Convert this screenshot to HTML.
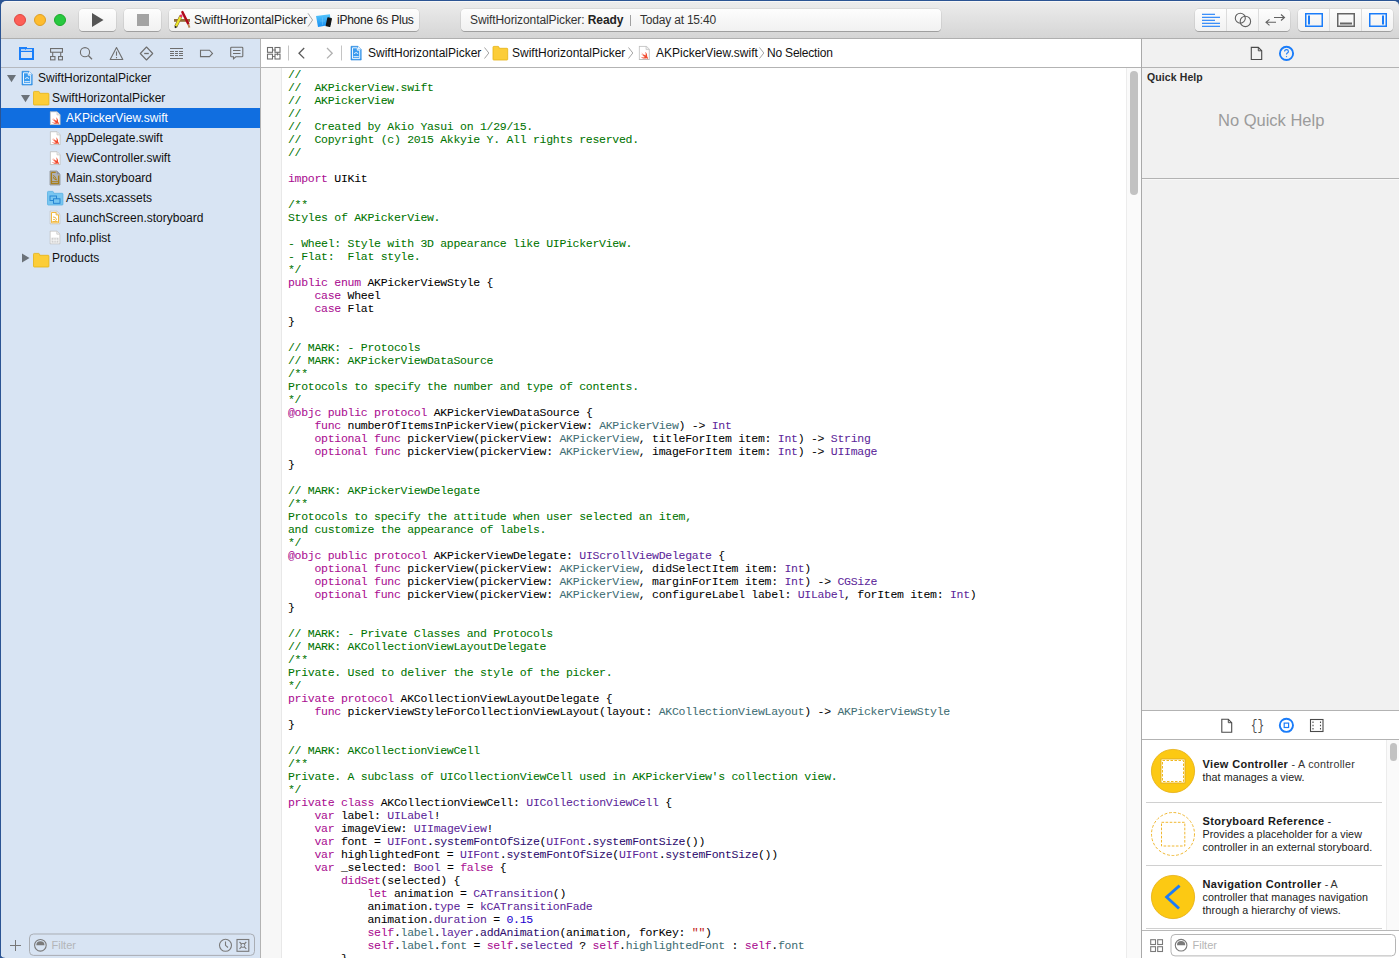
<!DOCTYPE html>
<html><head><meta charset="utf-8">
<style>
*{margin:0;padding:0;box-sizing:border-box}
html,body{width:1399px;height:958px;overflow:hidden;background:#2b5493}
body{position:relative;font-family:"Liberation Sans",sans-serif;color:#000}
.a{position:absolute;white-space:nowrap}
svg{position:absolute;overflow:visible}
#toolbar{position:absolute;left:1px;top:1px;width:1398px;height:37px;background:linear-gradient(#ececec,#d5d5d5);border-top:1px solid #f7f7f7;border-radius:5px 5px 0 0}
#tbline{position:absolute;left:1px;top:38px;width:1398px;height:1px;background:#afafaf}
.btn{position:absolute;top:9px;height:22px;background:linear-gradient(#fdfdfd,#f1f1f1);border-radius:4px;box-shadow:0 0 0 0.5px rgba(0,0,0,.12),0 1px 0.5px rgba(0,0,0,.22)}
.tl{position:absolute;top:14px;width:12px;height:12px;border-radius:50%}
#nav{position:absolute;left:1px;top:39px;width:259px;height:919px;background:#d8e4f3}
#navsep{position:absolute;left:260px;top:39px;width:1px;height:919px;background:#b3b3b3}
#editor{position:absolute;left:261px;top:39px;width:880px;height:919px;background:#fff}
#util{position:absolute;left:1142px;top:39px;width:257px;height:919px;background:#f1f1f1}
#utilsep{position:absolute;left:1141px;top:39px;width:1px;height:919px;background:#a9a9a9}
.hl{position:absolute;height:1px}
.t12{font-size:12px;line-height:12px}
.t11{font-size:11px;line-height:11px}
#code{position:absolute;left:288px;top:68px;font-family:"Liberation Mono",monospace;font-size:11.5px;line-height:13px;white-space:pre;color:#000;-webkit-text-stroke:0.05px;letter-spacing:-0.282px}
.c{color:#007400}.k{color:#aa0d91}.t{color:#5c2699}.p{color:#3f6e74}.f{color:#2e0d6e}.pf{color:#26474b}.s{color:#c41a16}.n{color:#1c00cf}
</style></head><body>
<!-- TOOLBAR -->
<div id="toolbar"></div>
<div id="tbline"></div>
<div class="tl" style="left:14px;background:#fd5f57;border:0.5px solid #df4640"></div>
<div class="tl" style="left:34px;background:#febc2e;border:0.5px solid #de9f22"></div>
<div class="tl" style="left:54px;background:#28c840;border:0.5px solid #1aab29"></div>
<div class="btn" style="left:79px;width:37px"></div>
<div class="btn" style="left:124px;width:37px"></div>
<div class="btn" style="left:169px;width:250px"></div>
<div class="btn" style="left:461px;width:480px"></div>
<div class="btn" style="left:1195px;width:95px"></div>
<div class="btn" style="left:1298px;width:95px"></div>
<svg style="left:0;top:0" width="1399" height="38">
 <polygon points="92,13 92,27 103.5,20" fill="#555"/>
 <rect x="137" y="14" width="12" height="12" fill="#a3a3a3"/>
 <!-- xcode icon -->
 <g transform="translate(174,11)">
  <line x1="1.6" y1="16" x2="6.9" y2="5" stroke="#6b5a2a" stroke-width="3"/>
  <rect x="0" y="8" width="16" height="2.8" fill="#94703a"/>
  <line x1="1.8" y1="15.6" x2="6.9" y2="5" stroke="#ece52c" stroke-width="2.2"/>
  <line x1="1.2" y1="16.8" x2="2" y2="15.2" stroke="#222" stroke-width="1.6"/>
  <circle cx="7.1" cy="4.9" r="1.4" fill="#e8336a"/>
  <line x1="8.4" y1="1.1" x2="14.2" y2="12.6" stroke="#b00818" stroke-width="2.4" stroke-linecap="round"/>
  <line x1="14.2" y1="13" x2="15.5" y2="16.6" stroke="#b98450" stroke-width="1.8"/>
 </g>
 <polyline points="308,13.3 312.6,20 308,26.6" fill="none" stroke="#a5a5a5" stroke-width="1"/>
 <!-- device icon -->
 <defs><linearGradient id="dg" x1="0" y1="0" x2="0" y2="1"><stop offset="0" stop-color="#56c6fb"/><stop offset="1" stop-color="#168ef2"/></linearGradient></defs>
 <g transform="translate(316,13)">
  <path d="M0,3 L13.9,1.2 L15,11.7 L2,14 Z" fill="url(#dg)"/>
  <path d="M6.5,4.5 V12 M4,8 H9" stroke="#9fdcff" stroke-width="0.5" opacity="0.6"/>
  <rect x="10.4" y="4.6" width="4.8" height="9.2" rx="0.8" fill="#151515" transform="rotate(12 12.8 9.2)"/>
 </g>
 <line x1="630.5" y1="15" x2="630.5" y2="26" stroke="#a0a0a0" stroke-width="1"/>
 <!-- right group 1 -->
 <line x1="1226.5" y1="9" x2="1226.5" y2="31" stroke="#dcdcdc"/>
 <line x1="1258.5" y1="9" x2="1258.5" y2="31" stroke="#dcdcdc"/>
 <g stroke="#1a7cf9" stroke-width="1.1">
  <line x1="1202" y1="14.3" x2="1215" y2="14.3"/>
  <line x1="1202" y1="17.3" x2="1220" y2="17.3"/>
  <line x1="1202" y1="20.3" x2="1215" y2="20.3"/>
  <line x1="1202" y1="23.3" x2="1220" y2="23.3"/>
  <line x1="1202" y1="26.3" x2="1220" y2="26.3"/>
 </g>
 <g fill="none" stroke="#616161" stroke-width="1.1">
  <circle cx="1240.3" cy="18.2" r="5"/>
  <circle cx="1245.4" cy="21.4" r="5.2"/>
  <path d="M1274,17.5 H1284.5 M1281,14.5 L1284.5,17.5 L1281,20.5"/>
  <path d="M1276,22.3 H1266 M1269.5,19.3 L1266,22.3 L1269.5,25.3"/>
 </g>
 <!-- right group 2 -->
 <line x1="1329.5" y1="9" x2="1329.5" y2="31" stroke="#dcdcdc"/>
 <line x1="1361.5" y1="9" x2="1361.5" y2="31" stroke="#dcdcdc"/>
 <g fill="none" stroke-width="1.5">
  <rect x="1305.75" y="13.75" width="16.5" height="12.5" stroke="#1a7cf9"/>
  <rect x="1337.75" y="13.75" width="16.5" height="12.5" stroke="#666"/>
  <rect x="1369.75" y="13.75" width="16.5" height="12.5" stroke="#1a7cf9"/>
 </g>
 <rect x="1308" y="15.5" width="2" height="9" fill="#1a7cf9"/>
 <rect x="1340" y="22.5" width="12" height="2" fill="#666"/>
 <rect x="1382" y="15.5" width="2" height="9" fill="#1a7cf9"/>
</svg>
<div class="a t12" style="left:194px;top:14px;color:#222">SwiftHorizontalPicker</div>
<div class="a t12" style="left:337px;top:14px;color:#222;letter-spacing:-0.25px">iPhone 6s Plus</div>
<div class="a t12" style="left:470px;top:14px;color:#333;letter-spacing:-0.1px">SwiftHorizontalPicker: <b style="color:#222">Ready</b></div>
<div class="a t12" style="left:640px;top:14px;color:#333;letter-spacing:-0.2px">Today at 15:40</div>

<!-- PANELS -->
<div id="nav"></div>
<div id="navsep"></div>
<div id="editor"></div>
<div id="utilsep"></div>
<div id="util"></div>
<!-- NAV tab bar -->
<div class="hl" style="left:1px;top:67px;width:259px;background:#b5b9bf"></div>
<svg style="left:0;top:39px" width="260" height="28">
 <defs>
  <symbol id="page" viewBox="0 0 11 14"><path d="M0.5,0.5 H7.3 L10.5,3.7 V13.5 H0.5 Z" fill="#fff" stroke="#bdbdbd" stroke-width="1"/><path d="M7.3,0.5 V3.7 H10.5" fill="#eee" stroke="#c9c9c9" stroke-width="0.8"/></symbol>
  <symbol id="swift" viewBox="0 0 11 14"><use href="#page" width="11" height="14"/><path transform="translate(1.2,5.1) scale(0.088)" d="M80,60 C85,45 78,25 58,10 C66,25 68,42 62,52 C45,42 25,25 15,15 C25,30 38,42 48,50 C35,45 20,35 10,28 C25,45 42,60 58,68 C42,76 22,72 8,64 C25,82 50,90 72,82 C78,82 85,86 88,92 C92,85 90,70 80,60 Z" fill="#f04a2e"/></symbol>
 </defs>
 <g fill="none" stroke="#6e6e6e" stroke-width="1">
  <!-- folder active -->
  <path d="M19,8 H27 V9 H34 V21 H19 Z" fill="#1a7ffa" stroke="none"/>
  <rect x="21" y="10.2" width="11" height="1.6" fill="#d8e4f3" stroke="none"/>
  <rect x="25" y="10.2" width="0.8" height="0.8" fill="#1a7ffa" stroke="none"/>
  <rect x="21" y="13" width="11" height="6" fill="#d8e4f3" stroke="none"/>
  <!-- hierarchy -->
  <rect x="50.55" y="9.55" width="11.9" height="3.7" stroke-width="1.1"/>
  <path d="M52.7,13.3 V17 M60.7,13.3 V17" stroke-width="1.1"/>
  <rect x="50.55" y="17.55" width="4.4" height="3.3" stroke-width="1.1"/>
  <rect x="58.55" y="17.55" width="3.9" height="3.3" stroke-width="1.1"/>
  <!-- search -->
  <circle cx="85" cy="13.2" r="4.6" stroke-width="1.1"/>
  <path d="M88.3,16.5 L92,20.3" stroke-width="1.3"/>
  <!-- warning -->
  <path d="M116.5,8.5 L122.8,20.5 H110.2 Z" stroke-linejoin="round" stroke-width="1.1"/>
  <path d="M116.5,12.5 V16.8 M116.5,18 V19.2" stroke-width="1.1"/>
  <!-- test diamond -->
  <path d="M146.5,8 L152.7,14.5 L146.5,21 L140.3,14.5 Z" stroke-linejoin="round" stroke-width="1.1"/>
  <path d="M144.2,14.5 H148.8" stroke-width="1.3"/>
  <!-- debug -->
  <path d="M170,9.5 H183 M170,19.5 H183" stroke-width="1.1"/>
  <path d="M170,12.5 H174 M175,12.5 H178 M179,12.5 H183 M170,14.5 H174 M175,14.5 H178 M179,14.5 H183 M170,16.5 H174 M175,16.5 H178 M179,16.5 H183" stroke-width="1"/>
  <!-- breakpoint -->
  <path d="M200.5,11.2 H209.5 L212.5,14.4 L209.5,17.6 H200.5 Z" stroke-width="1.1"/>
  <!-- report bubble -->
  <path d="M231.5,8.2 H242 Q242.8,8.2 242.8,9 V17 Q242.8,17.8 242,17.8 H235.8 L233.5,19.8 V17.8 H231.5 Q230.7,17.8 230.7,17 V9 Q230.7,8.2 231.5,8.2 Z" stroke-width="1.1"/>
  <path d="M233,11.5 H240.5 M233,14.5 H240.5" stroke-width="1"/>
 </g>
</svg>
<!-- selection -->
<div class="a" style="left:1px;top:108px;width:259px;height:20px;background:#106ee0"></div>
<svg style="left:0;top:68px" width="260" height="200">
 <!-- triangles -->
 <polygon points="7,7 16,7 11.5,14.3" fill="#6b7279"/>
 <polygon points="21,27 30,27 25.5,34.3" fill="#6b7279"/>
 <polygon points="22,185.5 22,194.5 29.5,190" fill="#6b7279"/>
 <!-- project icon -->
 <g transform="translate(21.5,2.8)">
  <path d="M0.5,0.5 H7.5 L10.7,3.7 V14.2 H0.5 Z" fill="#3a9bef" stroke="#2b87dc" stroke-width="0.6"/>
  <path d="M7.5,0.5 V3.7 H10.7 Z" fill="#e9f3fc"/>
  <path d="M2,2 H6.8 V4.4 H9.2 V12.8 H2 Z" fill="none" stroke="#fff" stroke-width="0.9"/>
  <path d="M3.6,7.8 Q5.6,5.6 7.6,7.8" fill="none" stroke="#fff" stroke-width="0.9"/>
  <path d="M3,10.9 H8.3" stroke="#fff" stroke-width="0.9"/>
 </g>
 <!-- folder -->
 <g transform="translate(33,23)">
  <path d="M0.5,1.2 Q0.5,0.4 1.3,0.4 H5.5 Q6.3,0.4 6.5,1.2 L6.7,2.3 H15.2 Q15.9,2.3 15.9,3 V13.3 Q15.9,14 15.2,14 H1.2 Q0.5,14 0.5,13.3 Z" fill="#fccd38" stroke="#e6b313" stroke-width="0.8"/>
 </g>
 <g transform="translate(33,185)">
  <path d="M0.5,1.2 Q0.5,0.4 1.3,0.4 H5.5 Q6.3,0.4 6.5,1.2 L6.7,2.3 H15.2 Q15.9,2.3 15.9,3 V13.3 Q15.9,14 15.2,14 H1.2 Q0.5,14 0.5,13.3 Z" fill="#fccd38" stroke="#e6b313" stroke-width="0.8"/>
 </g>
 <!-- swift files -->
 <use href="#swift" x="49.7" y="43.2" width="11" height="14"/>
 <use href="#swift" x="49.7" y="63.2" width="11" height="14"/>
 <use href="#swift" x="49.7" y="83.2" width="11" height="14"/>
 <!-- Main.storyboard -->
 <g transform="translate(49.5,102.5)">
  <path d="M0.5,0.5 H7.3 L10.5,3.7 V14.5 H0.5 Z" fill="#aeb1b7" stroke="#8d9096" stroke-width="0.8"/>
  <path d="M7.3,0.5 V3.7 H10.5 Z" fill="#8f9298"/>
  <path d="M1.9,1.9 H6.2 M9.1,5 V13.2 H1.9 V1.9" fill="none" stroke="#a8801c" stroke-width="1.3"/>
  <path d="M1.9,11.2 H9.1" stroke="#a8801c" stroke-width="1.1"/>
  <path d="M3.6,5 Q5.8,5.6 6.3,7.8 Q6.8,9.4 7.6,9.6 M3.8,6.6 Q4.3,9 6.8,9.4" fill="none" stroke="#a8801c" stroke-width="1"/>
 </g>
 <!-- Assets -->
 <g transform="translate(47,123)">
  <path d="M0.5,1.2 Q0.5,0.4 1.3,0.4 H5.5 Q6.3,0.4 6.5,1.2 L6.7,2.3 H15.2 Q15.9,2.3 15.9,3 V13.3 Q15.9,14 15.2,14 H1.2 Q0.5,14 0.5,13.3 Z" fill="#79c6f0" stroke="#58b0e3" stroke-width="0.8"/>
  <rect x="3" y="5" width="6.5" height="4.5" fill="none" stroke="#1f7fd0" stroke-width="0.9"/>
  <rect x="6.5" y="7.8" width="6.5" height="4.5" fill="#79c6f0" stroke="#1f7fd0" stroke-width="0.9"/>
 </g>
 <!-- LaunchScreen -->
 <g transform="translate(49.5,142.5)">
  <use href="#page" width="11" height="14"/>
  <path d="M2,2 H6.6 V4.4 H9 V12.3 H2 Z" fill="none" stroke="#f0b129" stroke-width="0.9"/>
  <path d="M3.5,6.5 Q6.5,6 7.2,9.4 M3.7,9 Q5.5,8.5 6.6,10.4" fill="none" stroke="#e3a41c" stroke-width="0.8"/>
  <path d="M2.8,11 H8.2" stroke="#f0b129" stroke-width="0.9"/>
 </g>
 <!-- Info.plist -->
 <g transform="translate(49.5,162.5)">
  <use href="#page" width="11" height="14"/>
  <rect x="2" y="7.2" width="7" height="5" fill="#cfcfcf"/>
  <path d="M2,9.7 H9 M4.4,7.2 V12.2 M6.7,7.2 V12.2" stroke="#fff" stroke-width="0.7"/>
 </g>
</svg>
<div class="a t12" style="left:38px;top:72px;color:#111">SwiftHorizontalPicker</div>
<div class="a t12" style="left:52px;top:92px;color:#111">SwiftHorizontalPicker</div>
<div class="a t12" style="left:66px;top:112px;color:#fff">AKPickerView.swift</div>
<div class="a t12" style="left:66px;top:132px;color:#111">AppDelegate.swift</div>
<div class="a t12" style="left:66px;top:152px;color:#111">ViewController.swift</div>
<div class="a t12" style="left:66px;top:172px;color:#111">Main.storyboard</div>
<div class="a t12" style="left:66px;top:192px;color:#111">Assets.xcassets</div>
<div class="a t12" style="left:66px;top:212px;color:#111">LaunchScreen.storyboard</div>
<div class="a t12" style="left:66px;top:232px;color:#111">Info.plist</div>
<div class="a t12" style="left:52px;top:252px;color:#111">Products</div>
<!-- filter bar -->
<svg style="left:0;top:930px" width="260" height="28">
 <path d="M15.5,10 V21 M10,15.5 H21" stroke="#777" stroke-width="1"/>
 <rect x="29.5" y="4" width="225" height="21.4" rx="4" fill="none" stroke="#a9adb3" stroke-width="1"/>
 <circle cx="40.4" cy="15.3" r="5.8" fill="none" stroke="#7a7a7a" stroke-width="1.1"/>
 <path d="M36.3,15.3 A4.1,4.1 0 0 1 44.5,15.3 Z" fill="#7a7a7a"/>
 <circle cx="225.5" cy="15.3" r="6" fill="none" stroke="#7a7a7a" stroke-width="1.1"/>
 <path d="M225.5,11.5 V15.3 L228,17.5" fill="none" stroke="#7a7a7a" stroke-width="1.1"/>
 <rect x="237" y="9.5" width="11.8" height="11.8" fill="none" stroke="#7a7a7a" stroke-width="1.1"/>
 <path d="M239.5,12 L246.3,18.8 M246.3,12 L239.5,18.8" stroke="#7a7a7a" stroke-width="1.1"/>
 <circle cx="242.9" cy="15.4" r="2" fill="#d8e4f3" stroke="#7a7a7a" stroke-width="1"/>
</svg>
<div class="a t11" style="left:51.5px;top:940px;color:#b3b5b8">Filter</div>

<!-- editor jump bar -->
<div class="hl" style="left:261px;top:67px;width:880px;background:#b3b3b3"></div>
<!-- gutter -->
<div class="a" style="left:261px;top:68px;width:20px;height:890px;background:#f7f7f7"></div>
<div class="a" style="left:281px;top:68px;width:1px;height:890px;background:#e8e8e8"></div>
<!-- scrollbar -->
<div class="a" style="left:1126px;top:68px;width:15px;height:890px;background:#fafafa;border-left:1px solid #ececec"></div>
<div class="a" style="left:1130px;top:71px;width:8px;height:124px;background:#c2c2c2;border-radius:4px"></div>
<svg style="left:261px;top:39px" width="880" height="28">
 <g fill="none" stroke="#6e6e6e" stroke-width="1.1">
  <rect x="6.5" y="8.5" width="5" height="4.8"/>
  <rect x="14" y="8.5" width="5" height="4.8"/>
  <rect x="6.5" y="15.2" width="5" height="4.8"/>
  <rect x="14" y="15.2" width="5" height="4.8"/>
 </g>
 <path d="M11.5,11 H15 M16.5,13.5 V16.5 M11.5,17.5 H14" stroke="#6e6e6e" stroke-width="0.9"/>
 <line x1="27.5" y1="6.5" x2="27.5" y2="21.5" stroke="#c4c4c4" stroke-width="1"/>
 <polyline points="43.2,9 38,14.2 43.2,19.4" fill="none" stroke="#595959" stroke-width="1.3"/>
 <polyline points="66,9 71.2,14.2 66,19.4" fill="none" stroke="#b0b0b0" stroke-width="1.3"/>
 <line x1="80.5" y1="6.5" x2="80.5" y2="21.5" stroke="#c4c4c4" stroke-width="1"/>
 <!-- project icon -->
 <g transform="translate(89.5,6.8)">
  <path d="M0.5,0.5 H7.5 L10.7,3.7 V14.2 H0.5 Z" fill="#3a9bef" stroke="#2b87dc" stroke-width="0.6"/>
  <path d="M7.5,0.5 V3.7 H10.7 Z" fill="#e9f3fc"/>
  <path d="M2,2 H6.8 V4.4 H9.2 V12.8 H2 Z" fill="none" stroke="#fff" stroke-width="0.9"/>
  <path d="M3.6,7.8 Q5.6,5.6 7.6,7.8" fill="none" stroke="#fff" stroke-width="0.9"/>
  <path d="M3,10.9 H8.3" stroke="#fff" stroke-width="0.9"/>
 </g>
 <g fill="none" stroke="#9a9a9a" stroke-width="0.9">
  <polyline points="223.5,8.5 227.8,14 223.5,19.5"/>
  <polyline points="367.5,8.5 371.8,14 367.5,19.5"/>
  <polyline points="498.5,8.5 502.8,14 498.5,19.5"/>
 </g>
 <g transform="translate(231.5,7)">
  <path d="M0.5,1.2 Q0.5,0.4 1.3,0.4 H5.5 Q6.3,0.4 6.5,1.2 L6.7,2.3 H14.5 Q15.2,2.3 15.2,3 V13.3 Q15.2,14 14.5,14 H1.2 Q0.5,14 0.5,13.3 Z" fill="#fccd38" stroke="#e6b313" stroke-width="0.8"/>
 </g>
 <use href="#swift" x="377.5" y="6.8" width="11.5" height="14.2"/>
</svg>
<div class="a t12" style="left:368px;top:47px;color:#111">SwiftHorizontalPicker</div>
<div class="a t12" style="left:512px;top:47px;color:#111">SwiftHorizontalPicker</div>
<div class="a t12" style="left:656px;top:47px;color:#111">AKPickerView.swift</div>
<div class="a t12" style="left:767px;top:47px;color:#111;letter-spacing:-0.2px">No Selection</div>

<!-- util tab bar -->
<div class="hl" style="left:1142px;top:67px;width:257px;background:#b3b3b3"></div>
<svg style="left:1142px;top:39px" width="257" height="28">
 <path d="M109.3,8.4 H116.3 L119.7,11.8 V20.5 H109.3 Z" fill="none" stroke="#4a4a4a" stroke-width="1.1"/>
 <path d="M116.3,8.4 V11.8 H119.7" fill="none" stroke="#4a4a4a" stroke-width="1"/>
 <circle cx="144.5" cy="14.4" r="6.6" fill="none" stroke="#1a7cf9" stroke-width="1.9"/>
 <path d="M142.6,12.6 Q142.6,10.6 144.5,10.6 Q146.4,10.6 146.4,12.4 Q146.4,13.4 145.3,14 Q144.5,14.5 144.5,15.6" fill="none" stroke="#1a7cf9" stroke-width="1.1"/>
 <circle cx="144.5" cy="17.6" r="0.7" fill="#1a7cf9"/>
</svg>
<div class="a" style="left:1147px;top:72px;font-size:10.5px;line-height:10.5px;font-weight:bold;color:#2a2a2a;letter-spacing:0.1px">Quick Help</div>
<div class="a" style="left:1218px;top:112px;font-size:16.5px;line-height:16.5px;color:#9b9b9b">No Quick Help</div>
<div class="hl" style="left:1142px;top:178px;width:257px;background:#b3b3b3"></div><div class="hl" style="left:1142px;top:179px;width:257px;background:#f8f8f8"></div>
<!-- library -->
<div class="hl" style="left:1142px;top:710px;width:257px;background:#b3b3b3"></div>
<div class="a" style="left:1142px;top:711px;width:257px;height:28px;background:#fff"></div>
<div class="hl" style="left:1142px;top:739px;width:257px;background:#b3b3b3"></div>
<svg style="left:1142px;top:711px" width="257" height="28">
 <path d="M79.8,8.3 H86.3 L89.7,11.7 V21.3 H79.8 Z" fill="none" stroke="#4a4a4a" stroke-width="1.1"/>
 <path d="M86.3,8.3 V11.7 H89.7" fill="none" stroke="#4a4a4a" stroke-width="1"/>
 <circle cx="144.4" cy="14.3" r="6.6" fill="none" stroke="#1a7cf9" stroke-width="1.9"/>
 <rect x="142.2" y="12.1" width="4.4" height="4.4" fill="none" stroke="#1a7cf9" stroke-width="1.2"/>
 <rect x="168.5" y="8.5" width="12.5" height="12" fill="none" stroke="#4a4a4a" stroke-width="1.1"/>
 <path d="M171,10.5 V12 M171,13.8 V15.3 M171,17 V18.5 M178.5,10.5 V12 M178.5,13.8 V15.3 M178.5,17 V18.5" stroke="#4a4a4a" stroke-width="1.1"/>
</svg>
<div class="a" style="left:1248.5px;top:719px;font-family:'Liberation Mono',monospace;font-size:14px;line-height:14px;color:#4a4a4a;transform:scaleX(0.8)">{}</div>
<div class="a" style="left:1142px;top:740px;width:257px;height:190px;background:#fff"></div>
<div class="a" style="left:1386px;top:740px;width:13px;height:190px;background:#fafafa;border-left:1px solid #ececec"></div>
<div class="a" style="left:1390px;top:743px;width:7px;height:18px;background:#c2c2c2;border-radius:3.5px"></div>
<div class="hl" style="left:1146px;top:802px;width:236px;background:#d0d0d0"></div>
<div class="hl" style="left:1146px;top:865px;width:236px;background:#d0d0d0"></div>
<div class="hl" style="left:1146px;top:928px;width:236px;background:#d0d0d0"></div>
<svg style="left:1142px;top:740px" width="257" height="190">
 <!-- VC -->
 <circle cx="31" cy="31" r="21.6" fill="#fcc913" stroke="#e5ad0f" stroke-width="0.8"/>
 <rect x="18.75" y="18.75" width="24.5" height="24.5" rx="1" fill="#fff" stroke="#eeba1c" stroke-width="1.5"/>
 <rect x="20.5" y="20.5" width="21" height="21" fill="none" stroke="#efb820" stroke-width="1" stroke-dasharray="2.5,1.5"/>
 <!-- SR -->
 <circle cx="31" cy="94" r="21.5" fill="none" stroke="#f0b832" stroke-width="1" stroke-dasharray="2.8,1.8"/>
 <rect x="19.5" y="82.3" width="23.3" height="23.7" fill="none" stroke="#f0b832" stroke-width="1" stroke-dasharray="2.6,1.5"/>
 <!-- NC -->
 <circle cx="31" cy="157" r="21.6" fill="#fcc913" stroke="#e5ad0f" stroke-width="0.8"/>
 <polyline points="37.6,145.6 24.6,157 37,168.6" fill="none" stroke="#1a7cf9" stroke-width="2.8"/>
</svg>
<div class="a" style="left:1202.5px;top:757.5px;font-size:11px;line-height:13px;color:#1a1a1a;white-space:normal;width:190px"><b style="letter-spacing:0.35px">View Controller</b><span style="font-size:10.7px;color:#333;letter-spacing:0.3px"> - A controller</span></div>
<div class="a" style="left:1202.5px;top:770.5px;font-size:10.7px;line-height:13px;color:#1a1a1a;letter-spacing:0.08px">that manages a view.</div>
<div class="a" style="left:1202.5px;top:814.5px;font-size:11px;line-height:13px;color:#1a1a1a"><b style="letter-spacing:0.35px">Storyboard Reference</b><span style="color:#333"> -</span></div>
<div class="a" style="left:1202.5px;top:827.5px;font-size:10.7px;line-height:13px;color:#1a1a1a;letter-spacing:0.06px">Provides a placeholder for a view</div>
<div class="a" style="left:1202.5px;top:840.5px;font-size:10.7px;line-height:13px;color:#1a1a1a;letter-spacing:0.06px">controller in an external storyboard.</div>
<div class="a" style="left:1202.5px;top:877.5px;font-size:11px;line-height:13px;color:#1a1a1a"><b style="letter-spacing:0.35px">Navigation Controller</b><span style="font-size:10.7px;color:#333"> - A</span></div>
<div class="a" style="left:1202.5px;top:890.5px;font-size:10.7px;line-height:13px;color:#1a1a1a;letter-spacing:0.06px">controller that manages navigation</div>
<div class="a" style="left:1202.5px;top:903.5px;font-size:10.7px;line-height:13px;color:#1a1a1a;letter-spacing:0.06px">through a hierarchy of views.</div>
<!-- library filter bar -->
<div class="hl" style="left:1142px;top:930px;width:257px;background:#b8b8b8"></div>
<div class="a" style="left:1142px;top:931px;width:257px;height:27px;background:#fff"></div>
<svg style="left:1142px;top:931px" width="257" height="27">
 <g fill="none" stroke="#7a7a7a" stroke-width="1.1">
  <rect x="8.7" y="8.7" width="4.8" height="4.8"/>
  <rect x="15.7" y="8.7" width="4.8" height="4.8"/>
  <rect x="8.7" y="15.7" width="4.8" height="4.8"/>
  <rect x="15.7" y="15.7" width="4.8" height="4.8"/>
 </g>
 <rect x="29" y="3.5" width="224.5" height="21.4" rx="4" fill="#fff" stroke="#b5b5b5" stroke-width="1"/>
 <circle cx="39.1" cy="14.2" r="5.8" fill="none" stroke="#7a7a7a" stroke-width="1.1"/>
 <path d="M35,14.2 A4.1,4.1 0 0 1 43.2,14.2 Z" fill="#7a7a7a"/>
</svg>
<div class="a t11" style="left:1192.5px;top:940px;color:#b5b5b5">Filter</div>

<div id="code"><span class="c">//</span>
<span class="c">//  AKPickerView.swift</span>
<span class="c">//  AKPickerView</span>
<span class="c">//</span>
<span class="c">//  Created by Akio Yasui on 1/29/15.</span>
<span class="c">//  Copyright (c) 2015 Akkyie Y. All rights reserved.</span>
<span class="c">//</span>

<span class="k">import</span> UIKit

<span class="c">/**</span>
<span class="c">Styles of AKPickerView.</span>
<span class="c"></span>
<span class="c">- Wheel: Style with 3D appearance like UIPickerView.</span>
<span class="c">- Flat:  Flat style.</span>
<span class="c">*/</span>
<span class="k">public</span> <span class="k">enum</span> AKPickerViewStyle {
    <span class="k">case</span> Wheel
    <span class="k">case</span> Flat
}

<span class="c">// MARK: - Protocols</span>
<span class="c">// MARK: AKPickerViewDataSource</span>
<span class="c">/**</span>
<span class="c">Protocols to specify the number and type of contents.</span>
<span class="c">*/</span>
<span class="k">@objc</span> <span class="k">public</span> <span class="k">protocol</span> AKPickerViewDataSource {
    <span class="k">func</span> numberOfItemsInPickerView(pickerView: <span class="p">AKPickerView</span>) -&gt; <span class="t">Int</span>
    <span class="k">optional</span> <span class="k">func</span> pickerView(pickerView: <span class="p">AKPickerView</span>, titleForItem item: <span class="t">Int</span>) -&gt; <span class="t">String</span>
    <span class="k">optional</span> <span class="k">func</span> pickerView(pickerView: <span class="p">AKPickerView</span>, imageForItem item: <span class="t">Int</span>) -&gt; <span class="t">UIImage</span>
}

<span class="c">// MARK: AKPickerViewDelegate</span>
<span class="c">/**</span>
<span class="c">Protocols to specify the attitude when user selected an item,</span>
<span class="c">and customize the appearance of labels.</span>
<span class="c">*/</span>
<span class="k">@objc</span> <span class="k">public</span> <span class="k">protocol</span> AKPickerViewDelegate: <span class="t">UIScrollViewDelegate</span> {
    <span class="k">optional</span> <span class="k">func</span> pickerView(pickerView: <span class="p">AKPickerView</span>, didSelectItem item: <span class="t">Int</span>)
    <span class="k">optional</span> <span class="k">func</span> pickerView(pickerView: <span class="p">AKPickerView</span>, marginForItem item: <span class="t">Int</span>) -&gt; <span class="t">CGSize</span>
    <span class="k">optional</span> <span class="k">func</span> pickerView(pickerView: <span class="p">AKPickerView</span>, configureLabel label: <span class="t">UILabel</span>, forItem item: <span class="t">Int</span>)
}

<span class="c">// MARK: - Private Classes and Protocols</span>
<span class="c">// MARK: AKCollectionViewLayoutDelegate</span>
<span class="c">/**</span>
<span class="c">Private. Used to deliver the style of the picker.</span>
<span class="c">*/</span>
<span class="k">private</span> <span class="k">protocol</span> AKCollectionViewLayoutDelegate {
    <span class="k">func</span> pickerViewStyleForCollectionViewLayout(layout: <span class="p">AKCollectionViewLayout</span>) -&gt; <span class="p">AKPickerViewStyle</span>
}

<span class="c">// MARK: AKCollectionViewCell</span>
<span class="c">/**</span>
<span class="c">Private. A subclass of UICollectionViewCell used in AKPickerView&#x27;s collection view.</span>
<span class="c">*/</span>
<span class="k">private</span> <span class="k">class</span> AKCollectionViewCell: <span class="t">UICollectionViewCell</span> {
    <span class="k">var</span> label: <span class="t">UILabel</span>!
    <span class="k">var</span> imageView: <span class="t">UIImageView</span>!
    <span class="k">var</span> font = <span class="t">UIFont</span>.<span class="f">systemFontOfSize</span>(<span class="t">UIFont</span>.<span class="f">systemFontSize</span>())
    <span class="k">var</span> highlightedFont = <span class="t">UIFont</span>.<span class="f">systemFontOfSize</span>(<span class="t">UIFont</span>.<span class="f">systemFontSize</span>())
    <span class="k">var</span> _selected: <span class="t">Bool</span> = <span class="k">false</span> {
        <span class="k">didSet</span>(selected) {
            <span class="k">let</span> animation = <span class="t">CATransition</span>()
            animation.<span class="t">type</span> = <span class="t">kCATransitionFade</span>
            animation.<span class="t">duration</span> = <span class="n">0.15</span>
            <span class="k">self</span>.<span class="p">label</span>.<span class="t">layer</span>.<span class="f">addAnimation</span>(animation, forKey: <span class="s">&quot;&quot;</span>)
            <span class="k">self</span>.<span class="p">label</span>.<span class="p">font</span> = <span class="k">self</span>.<span class="t">selected</span> ? <span class="k">self</span>.<span class="p">highlightedFont</span> : <span class="k">self</span>.<span class="p">font</span>
        }</div>
<div class="a" style="left:0;top:953px;width:5px;height:5px;background:radial-gradient(circle at 5px 0px, rgba(43,84,147,0) 4.3px, #2b5493 5.3px)"></div>
</body></html>
